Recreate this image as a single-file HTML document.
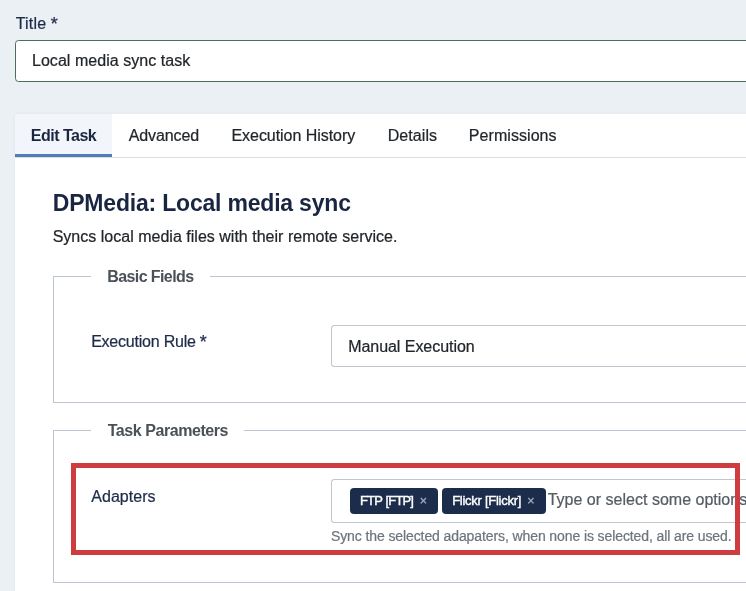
<!DOCTYPE html>
<html lang="en">
<head>
<meta charset="utf-8">
<title>Edit Task</title>
<style>
html,body{margin:0;padding:0;}
body{width:746px;height:591px;overflow:hidden;background:#ebf0f4;font-family:"Liberation Sans",sans-serif;position:relative;color:#22262a;}
.t{position:absolute;white-space:nowrap;line-height:1;font-size:16px;-webkit-text-stroke-width:0.22px;}
.abs{position:absolute;box-sizing:border-box;}
#wrap{position:absolute;left:0;top:0;width:746px;height:591px;overflow:hidden;will-change:transform;}
#titleinput{left:15px;top:40px;width:760px;height:42px;border:1px solid #47705a;border-radius:3.5px;background:#fff;}
#tabbar{left:15px;top:114px;width:760px;height:44px;background:#fff;border-bottom:1px solid #dfe3e7;box-shadow:0 0 3px rgba(0,0,0,.05);}
#tabactive{left:15px;top:114px;width:97px;height:43px;background:#f2f5f9;}
#tabline{left:15px;top:154px;width:97px;height:3px;background:#4f7dba;}
#panel{left:15px;top:158px;width:760px;height:460px;background:#fff;box-shadow:0 0 3px rgba(0,0,0,.05);}
.fs{border:1px solid #bcc5d2;border-right:none;}
#fs1{left:53px;top:276px;width:720px;height:127px;}
#fs2{left:53px;top:430px;width:720px;height:153px;}
.lg{background:#fff;height:20px;}
#lg1{left:91px;top:266px;width:119px;}
#lg2{left:91px;top:420px;width:153px;}
.box{background:#fff;border:1px solid #bfc6cf;border-radius:3.5px;border-right:none;}
#sel{left:331px;top:325px;width:440px;height:42px;}
#cho{left:331px;top:479px;width:440px;height:43.5px;}
.chip{background:#1c2d4b;border-radius:4px;height:26px;top:488px;}
#chip1{left:350px;width:88px;}
#chip2{left:442px;width:104px;}
#red{left:71px;top:463px;width:669px;height:92px;border:5px solid #cf3c3f;}
.navy{color:#1d2b49;}
.ast{font-size:18px;line-height:0;position:relative;top:1px;left:-0.2px;}
.chiptxt{font-size:13px;color:#fff;-webkit-text-stroke:0.4px #fff;}
.x{color:#a3adbf;font-size:12.5px;-webkit-text-stroke:0.3px #a3adbf;}
</style>
</head>
<body>
<div id="wrap">
<span class="t navy" id="t1" style="left:15.69px;top:16.4px;letter-spacing:0.2px;">Title <span class="ast">*</span></span>
<div class="abs" id="titleinput"></div>
<span class="t" id="t2" style="left:31.94px;top:52.7px;letter-spacing:0.047px;">Local media sync task</span>

<div class="abs" id="tabbar"></div>
<div class="abs" id="tabactive"></div>
<div class="abs" id="tabline"></div>
<span class="t navy" id="t3" style="left:30.82px;top:127.9px;font-weight:bold;letter-spacing:-0.5px;-webkit-text-stroke-width:0;color:#1a2641;">Edit Task</span>
<span class="t" id="t4" style="left:128.71px;top:127.9px;letter-spacing:-0.1px;">Advanced</span>
<span class="t" id="t5" style="left:231.44px;top:127.9px;letter-spacing:-0.042px;">Execution History</span>
<span class="t" id="t6" style="left:387.64px;top:127.9px;letter-spacing:0.092px;">Details</span>
<span class="t" id="t7" style="left:468.84px;top:127.9px;letter-spacing:0.06px;">Permissions</span>

<div class="abs" id="panel"></div>
<span class="t navy" id="t8" style="left:52.8px;top:191.6px;font-size:23px;font-weight:bold;letter-spacing:-0.2px;-webkit-text-stroke-width:0;color:#1a2641;">DPMedia: Local media sync</span>
<span class="t" id="t9" style="left:52.68px;top:229.2px;letter-spacing:0.013px;">Syncs local media files with their remote service.</span>

<div class="abs fs" id="fs1"></div>
<div class="abs lg" id="lg1"></div>
<span class="t" id="t10" style="left:107.32px;top:268.8px;font-weight:bold;color:#495057;letter-spacing:-0.6px;-webkit-text-stroke-width:0;">Basic Fields</span>
<span class="t navy" id="t11" style="left:91.14px;top:334.0px;letter-spacing:-0.22px;">Execution Rule <span class="ast">*</span></span>
<div class="abs box" id="sel"></div>
<span class="t" id="t12" style="left:348.14px;top:338.7px;letter-spacing:-0.04px;">Manual Execution</span>

<div class="abs fs" id="fs2"></div>
<div class="abs lg" id="lg2"></div>
<span class="t" id="t13" style="left:107.73px;top:422.7px;font-weight:bold;color:#495057;letter-spacing:-0.442px;-webkit-text-stroke-width:0;">Task Parameters</span>
<span class="t navy" id="t14" style="left:91.21px;top:488.9px;letter-spacing:0.051px;">Adapters</span>
<div class="abs box" id="cho"></div>
<div class="abs chip" id="chip1"></div>
<div class="abs chip" id="chip2"></div>
<span class="t chiptxt" id="t15" style="left:360px;top:494px;letter-spacing:-0.85px;word-spacing:1px;">FTP [FTP]</span>
<span class="t x" id="t16" style="left:419.7px;top:495.1px;letter-spacing:0.0px;">×</span>
<span class="t chiptxt" id="t17" style="left:452.2px;top:494px;letter-spacing:-0.27px;">Flickr [Flickr]</span>
<span class="t x" id="t18" style="left:527.2px;top:495.1px;letter-spacing:0.0px;">×</span>
<span class="t" id="t19" style="left:547.7px;top:491.7px;letter-spacing:0.01px;color:#565c63;">Type or select some options</span>
<span class="t" id="t20" style="left:330.96px;top:528.6px;font-size:14px;color:#6c757d;letter-spacing:-0.1px;">Sync the selected adapaters, when none is selected, all are used.</span>
<div class="abs" id="red"></div>
</div>
</body>
</html>
